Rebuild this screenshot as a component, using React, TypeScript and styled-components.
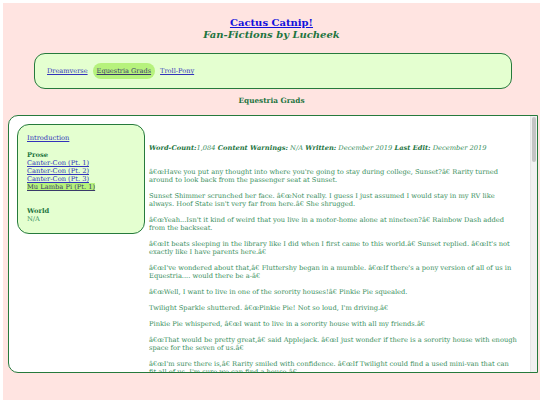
import React from 'react';
import styled, { createGlobalStyle } from 'styled-components';

const GlobalStyle = createGlobalStyle`
  html, body {
    margin: 0;
    background: #ffffff;
  }
  body {
    padding: 3px 0 0 3px;
    font-family: "DejaVu Serif", "Liberation Serif", serif;
  }
`;

const Page = styled.div`
  background: #ffe4e1;
  height: 397px;
  box-sizing: border-box;
  padding-top: 14px;
  overflow: hidden;
`;

const Header = styled.header`
  text-align: center;
  font-weight: bold;
  font-size: 10px;
  line-height: 12px;
`;

const Title = styled.a`
  color: #1111dd;
  text-decoration: underline;
`;

const Subtitle = styled.div`
  color: #1d7440;
  font-style: italic;
`;

const Nav = styled.nav`
  margin: 12px 28px 0 31px;
  height: 36px;
  box-sizing: border-box;
  display: flex;
  align-items: center;
  gap: 1px;
  padding: 0 8px;
  background: #e4ffd0;
  border: 1px solid #267a3c;
  border-radius: 11px;
`;

const NavLink = styled.a<{ $active?: boolean }>`
  font-size: 6.6px;
  line-height: 8px;
  padding: 4px;
  border-radius: 8px;
  color: ${(p) => (p.$active ? '#3a3a6a' : '#3333bb')};
  background: ${(p) => (p.$active ? '#b6f27c' : 'transparent')};
  text-decoration: underline;
`;

const SectionTitle = styled.h2`
  margin: 7px 0 9px;
  text-align: center;
  font-size: 7.3px;
  line-height: 10px;
  color: #1d7440;
`;

const Main = styled.main`
  margin: 0 2px 0 5px;
  height: 258px;
  box-sizing: border-box;
  border: 1px solid #267a3c;
  border-radius: 10px 0 0 10px;
  background: #ffffff;
  display: flex;
  overflow: hidden;
`;

const Sidebar = styled.aside`
  flex: 0 0 128px;
  align-self: flex-start;
  box-sizing: border-box;
  margin: 8px 0 0 8px;
  padding: 9px 9px 10px;
  background: #e4ffd0;
  border: 1px solid #267a3c;
  border-radius: 12px;
  font-size: 6.7px;
  line-height: 8px;
  color: #3a9060;
`;

const SideLink = styled.a<{ $active?: boolean }>`
  display: block;
  width: fit-content;
  color: ${(p) => (p.$active ? '#3a3a6a' : '#3333bb')};
  background: ${(p) => (p.$active ? '#b6f27c' : 'transparent')};
  text-decoration: underline;
`;

const SideGroup = styled.div<{ $gap: number }>`
  margin-top: ${(p) => p.$gap}px;
`;

const GroupTitle = styled.div`
  font-weight: bold;
  color: #1d7440;
`;

const Story = styled.article`
  flex: 1;
  align-self: flex-start;
  margin-left: 4px;
  padding: 28px 12px 0 0;
  font-size: 6.7px;
  line-height: 8px;
  color: #3a8f5e;
`;

const Meta = styled.p`
  margin: 0 0 16px;
  font-style: italic;
`;

const Label = styled.b`
  color: #1d7440;
`;

const Para = styled.p`
  margin: 0 0 8px;
`;

const ScrollTrack = styled.div`
  flex: 0 0 6px;
  align-self: stretch;
  background: #f1f1f1;
  border-left: 1px solid #e6e6e6;
  padding-top: 1px;
`;

const ScrollThumb = styled.div`
  height: 45px;
  margin: 0 1px;
  border-radius: 3px;
  background: #c4c4c4;
`;

const paragraphs = [
  'â€œHave you put any thought into where you\'re going to stay during college, Sunset?â€ Rarity turned around to look back from the passenger seat at Sunset.',
  'Sunset Shimmer scrunched her face. â€œNot really. I guess I just assumed I would stay in my RV like always. Hoof State isn\'t very far from here.â€ She shrugged.',
  'â€œYeah...Isn\'t it kind of weird that you live in a motor-home alone at nineteen?â€ Rainbow Dash added from the backseat.',
  'â€œIt beats sleeping in the library like I did when I first came to this world.â€ Sunset replied. â€œIt\'s not exactly like I have parents here.â€',
  'â€œI\'ve wondered about that,â€ Fluttershy began in a mumble. â€œIf there\'s a pony version of all of us in Equestria.... would there be a-â€',
  'â€œWell, I want to live in one of the sorority houses!â€ Pinkie Pie squealed.',
  'Twilight Sparkle shuttered. â€œPinkie Pie! Not so loud, I\'m driving.â€',
  'Pinkie Pie whispered, â€œI want to live in a sorority house with all my friends.â€',
  'â€œThat would be pretty great,â€ said Applejack. â€œI just wonder if there is a sorority house with enough space for the seven of us.â€',
  'â€œI\'m sure there is,â€ Rarity smiled with confidence. â€œIf Twilight could find a used mini-van that can fit all of us, I\'m sure we can find a house.â€',
];

const App = () => {
  return (
    <>
      <GlobalStyle />
      <Page>
        <Header>
          <Title href="#">Cactus Catnip!</Title>
          <Subtitle>Fan-Fictions by Lucheek</Subtitle>
        </Header>

        <Nav>
          <NavLink href="#">Dreamverse</NavLink>
          <NavLink href="#" $active>Equestria Grads</NavLink>
          <NavLink href="#">Troll-Pony</NavLink>
        </Nav>

        <SectionTitle>Equestria Grads</SectionTitle>

        <Main>
          <Sidebar>
            <SideLink href="#">Introduction</SideLink>
            <SideGroup $gap={9}>
              <GroupTitle>Prose</GroupTitle>
              <SideLink href="#">Canter-Con (Pt. 1)</SideLink>
              <SideLink href="#">Canter-Con (Pt. 2)</SideLink>
              <SideLink href="#">Canter-Con (Pt. 3)</SideLink>
              <SideLink href="#" $active>Mu Lamba Pi (Pt. 1)</SideLink>
            </SideGroup>
            <SideGroup $gap={16}>
              <GroupTitle>World</GroupTitle>
              N/A
            </SideGroup>
          </Sidebar>

          <Story>
            <Meta>
              <Label>Word-Count:</Label>1,084 <Label>Content Warnings:</Label> N/A{' '}
              <Label>Written:</Label> December 2019 <Label>Last Edit:</Label> December 2019
            </Meta>
            {paragraphs.map((text, i) => (
              <Para key={i}>{text}</Para>
            ))}
          </Story>

          <ScrollTrack>
            <ScrollThumb />
          </ScrollTrack>
        </Main>
      </Page>
    </>
  );
};

export default App;
